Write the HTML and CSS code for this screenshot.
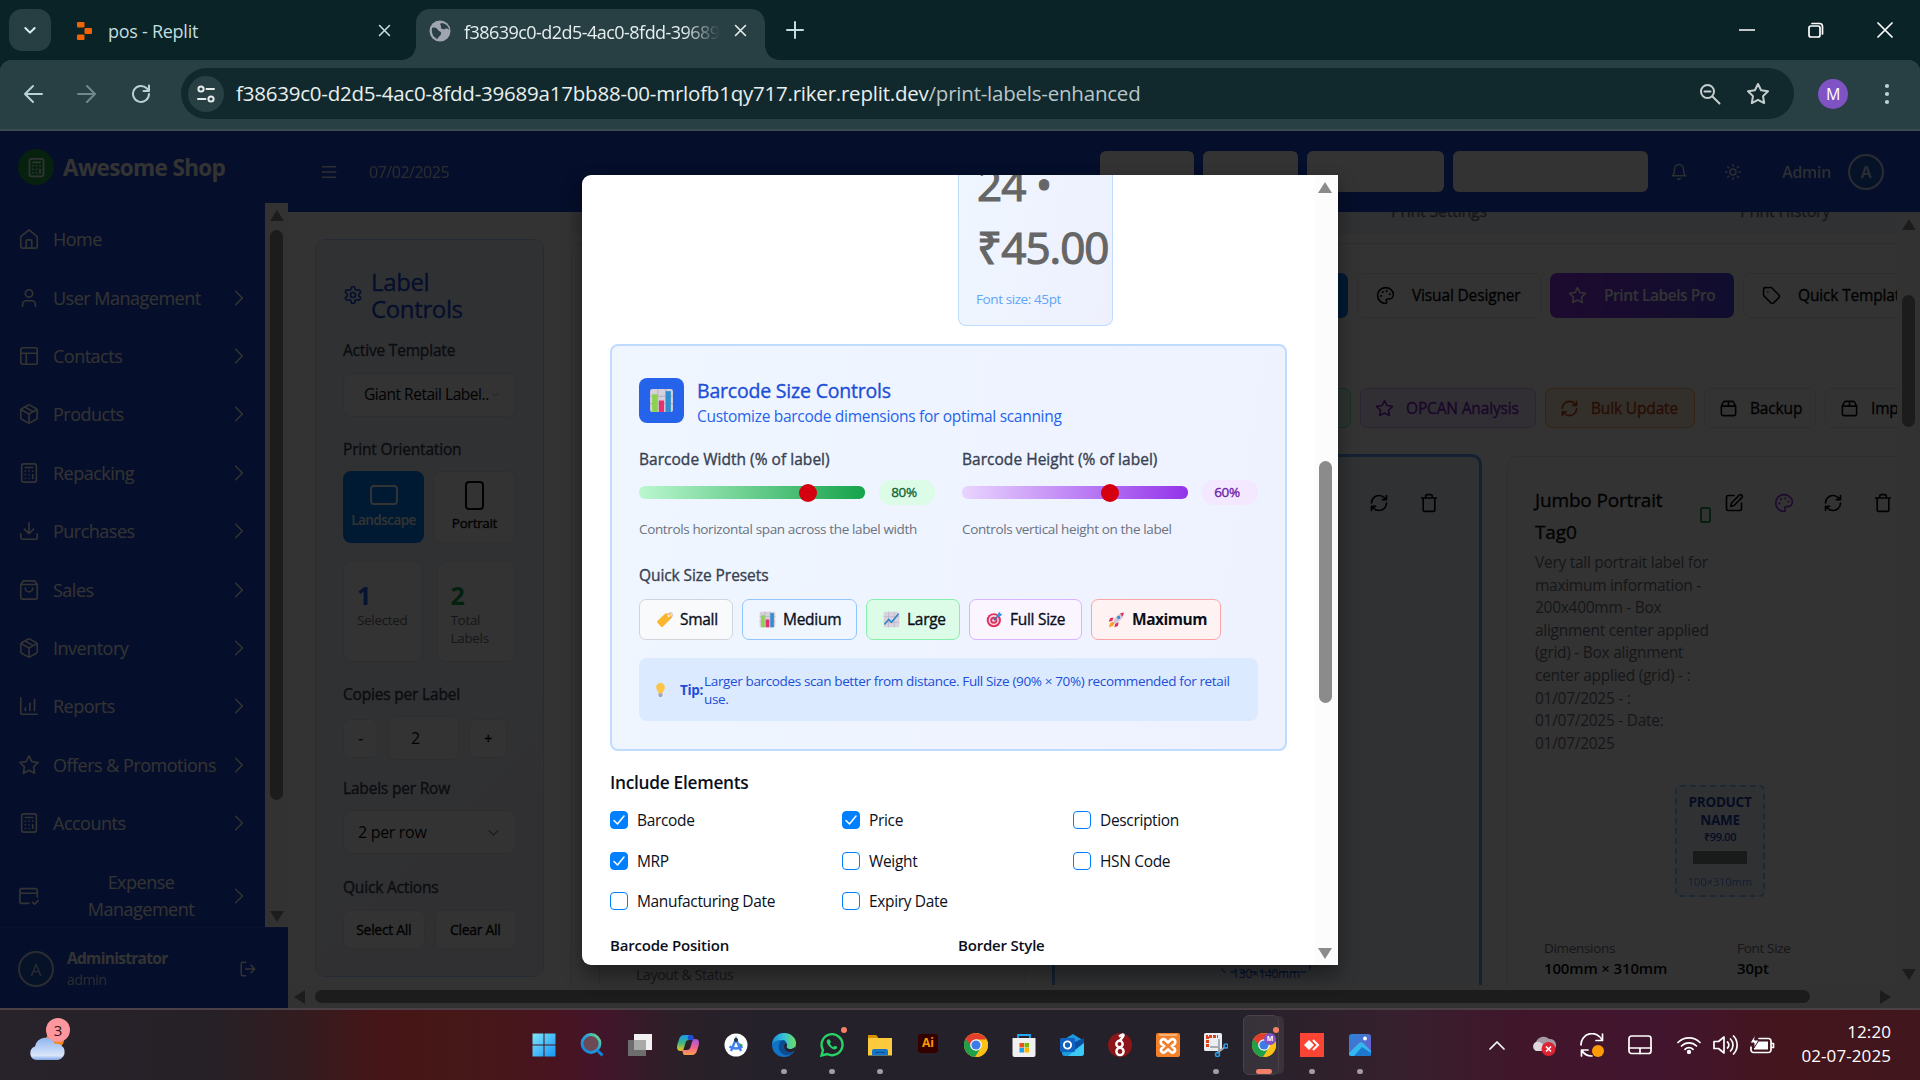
FILE: index.html
```html
<!DOCTYPE html>
<html lang="en">
<head>
<meta charset="utf-8">
<title>Print Labels Enhanced</title>
<link rel="stylesheet" href="styles.css">
</head>
<body>
<svg class="defs" aria-hidden="true">
  <defs>
    <linearGradient id="gWin" x1="0" y1="0" x2="1" y2="1"><stop offset="0" stop-color="#7fe6fb"/><stop offset="1" stop-color="#1595f5"/></linearGradient>
    <linearGradient id="gEdge" x1="0" y1="0" x2="1" y2="0"><stop offset="0" stop-color="#1b8fdc"/><stop offset=".5" stop-color="#35c1d8"/><stop offset="1" stop-color="#6fe05a"/></linearGradient>
    <linearGradient id="gCopA" x1="0" y1="0" x2="0" y2="1"><stop offset="0" stop-color="#1a9af0"/><stop offset=".5" stop-color="#3fb57f"/><stop offset="1" stop-color="#f3c51b"/></linearGradient>
    <linearGradient id="gCopB" x1="0" y1="0" x2="0" y2="1"><stop offset="0" stop-color="#a157e8"/><stop offset=".5" stop-color="#ee5f96"/><stop offset="1" stop-color="#ffa04a"/></linearGradient>
    <linearGradient id="gSearch" x1="0" y1="1" x2="1" y2="0"><stop offset="0" stop-color="#1182e0"/><stop offset=".6" stop-color="#2aa8d8"/><stop offset="1" stop-color="#7de07a"/></linearGradient>
    <linearGradient id="gPhoto" x1="0" y1="0" x2="1" y2="1"><stop offset="0" stop-color="#2486d8"/><stop offset="1" stop-color="#7a56c8"/></linearGradient>
    <linearGradient id="gCloud" x1="0" y1="0" x2="0" y2="1"><stop offset="0" stop-color="#8fb4f0"/><stop offset=".8" stop-color="#d9e6fa"/><stop offset="1" stop-color="#7ea6e6"/></linearGradient>
  </defs>
  <symbol id="i-home" viewBox="0 0 24 24"><path d="M3 9.5 12 2l9 7.500V20a2 2 0 0 1-2 2H5a2 2 0 0 1-2-2z"/><path d="M9 22v-8a1 1 0 0 1 1-1h4a1 1 0 0 1 1 1v8"/></symbol>
  <symbol id="i-user" viewBox="0 0 24 24"><path d="M19 21v-2a4 4 0 0 0-4-4H9a4 4 0 0 0-4 4v2"/><circle cx="12" cy="7" r="4"/></symbol>
  <symbol id="i-layout" viewBox="0 0 24 24"><rect x="3" y="3" width="18" height="18" rx="2"/><path d="M3 9h18M9 21V9"/></symbol>
  <symbol id="i-package" viewBox="0 0 24 24"><path d="M11 21.700a2 2 0 0 0 2 0l7-4a2 2 0 0 0 1-1.700V8a2 2 0 0 0-1-1.700l-7-4a2 2 0 0 0-2 0l-7 4A2 2 0 0 0 3 8v8a2 2 0 0 0 1 1.700zM12 22V12M3.300 7 12 12l8.700-5M7.500 4.300l9 5.100"/></symbol>
  <symbol id="i-calc" viewBox="0 0 24 24"><rect x="4" y="2" width="16" height="20" rx="2"/><path d="M8 6h8M16 14v4M16 10h.01M12 10h.01M8 10h.01M12 14h.01M8 14h.01M12 18h.01M8 18h.01"/></symbol>
  <symbol id="i-download" viewBox="0 0 24 24"><path d="M21 15v4a2 2 0 0 1-2 2H5a2 2 0 0 1-2-2v-4M7 10l5 5 5-5M12 15V3"/></symbol>
  <symbol id="i-bag" viewBox="0 0 24 24"><path d="M6 2 3 6v14a2 2 0 0 0 2 2h14a2 2 0 0 0 2-2V6l-3-4zM3 6h18M16 10a4 4 0 0 1-8 0"/></symbol>
  <symbol id="i-chart" viewBox="0 0 24 24"><path d="M3 3v16a2 2 0 0 0 2 2h16M18 17V5M13 17V9M8 17v-3"/></symbol>
  <symbol id="i-star" viewBox="0 0 24 24"><path d="m12 2 3.090 6.260L22 9.270l-5 4.870 1.180 6.880L12 17.770l-6.180 3.250L7 14.140 2 9.270l6.910-1.010z"/></symbol>
  <symbol id="i-cardcheck" viewBox="0 0 24 24"><path d="M21 13V6a2 2 0 0 0-2-2H4a2 2 0 0 0-2 2v12a2 2 0 0 0 2 2h8M2 9h19M16 19l2 2 4-4"/></symbol>
  <symbol id="i-right" viewBox="0 0 24 24"><path d="m8 4 8 8-8 8"/></symbol>
  <symbol id="i-down" viewBox="0 0 24 24"><path d="m5 9 7 7 7-7"/></symbol>
  <symbol id="i-logout" viewBox="0 0 24 24"><path d="M9 21H5a2 2 0 0 1-2-2V5a2 2 0 0 1 2-2h4M16 17l5-5-5-5M21 12H9"/></symbol>
  <symbol id="i-menu" viewBox="0 0 24 24"><path d="M3 5h18M3 12h18M3 19h18"/></symbol>
  <symbol id="i-bell" viewBox="0 0 24 24"><path d="M6 8a6 6 0 0 1 12 0c0 7 3 9 3 9H3s3-2 3-9M10.300 21a2 2 0 0 0 3.400 0"/></symbol>
  <symbol id="i-sun" viewBox="0 0 24 24"><circle cx="12" cy="12" r="4"/><path d="M12 2v2M12 20v2M4.900 4.900l1.400 1.400M17.700 17.700l1.400 1.400M2 12h2M20 12h2M6.300 17.700l-1.400 1.400M19.100 4.900l-1.400 1.400"/></symbol>
  <symbol id="i-gear" viewBox="0 0 24 24"><path d="M12.220 2h-.44a2 2 0 0 0-2 2v.18a2 2 0 0 1-1 1.730l-.43.25a2 2 0 0 1-2 0l-.15-.08a2 2 0 0 0-2.730.73l-.22.38a2 2 0 0 0 .73 2.730l.15.1a2 2 0 0 1 1 1.720v.51a2 2 0 0 1-1 1.740l-.15.09a2 2 0 0 0-.73 2.730l.22.38a2 2 0 0 0 2.730.73l.15-.08a2 2 0 0 1 2 0l.43.25a2 2 0 0 1 1 1.730V20a2 2 0 0 0 2 2h.44a2 2 0 0 0 2-2v-.18a2 2 0 0 1 1-1.730l.43-.25a2 2 0 0 1 2 0l.15.08a2 2 0 0 0 2.730-.73l.22-.39a2 2 0 0 0-.73-2.730l-.15-.08a2 2 0 0 1-1-1.740v-.5a2 2 0 0 1 1-1.740l.15-.09a2 2 0 0 0 .73-2.730l-.22-.38a2 2 0 0 0-2.730-.73l-.15.08a2 2 0 0 1-2 0l-.43-.25a2 2 0 0 1-1-1.730V4a2 2 0 0 0-2-2z"/><circle cx="12" cy="12" r="3"/></symbol>
  <symbol id="i-palette" viewBox="0 0 24 24"><path d="M12 2C6.500 2 2 6.500 2 12s4.500 10 10 10c.93 0 1.650-.75 1.650-1.690 0-.43-.18-.83-.44-1.120-.29-.29-.44-.65-.44-1.130a1.640 1.640 0 0 1 1.670-1.670h2c3.050 0 5.550-2.500 5.550-5.550C22 6 17.500 2 12 2z"/><path d="M13.500 6.500h.01M17.500 10.500h.01M8.500 7.500h.01M6.500 12.500h.01" stroke-width="2.600"/></symbol>
  <symbol id="i-tag" viewBox="0 0 24 24"><path d="M12.600 2.600A2 2 0 0 0 11.200 2H4a2 2 0 0 0-2 2v7.200a2 2 0 0 0 .6 1.400l8.700 8.700a2.400 2.400 0 0 0 3.400 0l6.600-6.600a2.400 2.400 0 0 0 0-3.400zM7.500 7.500h.01"/></symbol>
  <symbol id="i-refresh" viewBox="0 0 24 24"><path d="M3 12a9 9 0 0 1 9-9 9.750 9.750 0 0 1 6.740 2.740L21 8M21 3v5h-5M21 12a9 9 0 0 1-9 9 9.750 9.750 0 0 1-6.740-2.740L3 16M8 16H3v5"/></symbol>
  <symbol id="i-box" viewBox="0 0 24 24"><path d="M3 9h18v10a2 2 0 0 1-2 2H5a2 2 0 0 1-2-2zM3 9l2.450-4.900A2 2 0 0 1 7.240 3h9.520a2 2 0 0 1 1.800 1.100L21 9M12 3v6"/></symbol>
  <symbol id="i-edit" viewBox="0 0 24 24"><path d="M12 3H5a2 2 0 0 0-2 2v14a2 2 0 0 0 2 2h14a2 2 0 0 0 2-2v-7M18.400 2.600a2.100 2.100 0 0 1 3 3L12 15l-4 1 1-4z"/></symbol>
  <symbol id="i-trash" viewBox="0 0 24 24"><path d="M3 6h18M19 6v14a2 2 0 0 1-2 2H7a2 2 0 0 1-2-2V6M8 6V4a2 2 0 0 1 2-2h4a2 2 0 0 1 2 2v2"/></symbol>
  <symbol id="i-check" viewBox="0 0 18 18"><path d="m4 9.500 3.500 3.500 6.500-8"/></symbol>
  <symbol id="i-x" viewBox="0 0 24 24"><path d="m5 5 14 14M19 5 5 19"/></symbol>
  <symbol id="e-chart" viewBox="0 0 24 24"><rect x="1" y="1" width="22" height="22" rx="2" fill="#d6d0dd"/><path d="M8.500 1v22M16 1v22M1 8h22M1 15h22" stroke="#b5adc0" stroke-width="1"/><rect x="3" y="6" width="5" height="17" fill="#8bd34c"/><rect x="9.500" y="12" width="5" height="11" fill="#e5326f"/><rect x="16" y="3" width="5" height="20" fill="#2f8fd0"/></symbol>
  <symbol id="e-tag" viewBox="0 0 24 24"><path d="M13 3.500 20.500 3 22 10 10 22a2 2 0 0 1-3 0l-5-5.500a2 2 0 0 1 0-2.500z" fill="#fbb62d"/><circle cx="18" cy="6.500" r="1.800" fill="#fff"/><path d="M18 6c-1-4 5-5 5-1s-2 4-3 5" fill="none" stroke="#c99aa8" stroke-width="1.200"/></symbol>
  <symbol id="e-up" viewBox="0 0 24 24"><rect x="1" y="1" width="22" height="22" rx="2" fill="#d9d3e0"/><path d="M8 1v22M16 1v22M1 8h22M1 16h22" stroke="#b9b1c4" stroke-width="1"/><path d="m2 19 6-7 4 4L22 4" fill="none" stroke="#2b86c8" stroke-width="2.200"/></symbol>
  <symbol id="e-target" viewBox="0 0 24 24"><circle cx="11" cy="13" r="10" fill="#e0315f"/><circle cx="11" cy="13" r="7.200" fill="#f6dbe4"/><circle cx="11" cy="13" r="5" fill="#e0315f"/><circle cx="11" cy="13" r="2.200" fill="#f6dbe4"/><path d="m11 13 7-7" stroke="#2377b0" stroke-width="2"/><path d="m16 8 1-5 3-2v3h3l-2 3z" fill="#2f9ae0"/></symbol>
  <symbol id="e-rocket" viewBox="0 0 24 24"><path d="m8 9-5 1-2 5 5-1zM15 16l-1 5-5 2 1-5z" fill="#e0315f"/><path d="M7 16c3-7 6-12 15-14 0 8-6 13-13 16z" fill="#cfc8d8"/><path d="M17 3.500 22 2c0 2-.5 4-1.500 6z" fill="#e0315f"/><circle cx="15" cy="9" r="2.200" fill="#2f8fd0"/><path d="m7 15-4 2-2 6 6-2 2-4z" fill="#f9a12b"/></symbol>
  <symbol id="e-bulb" viewBox="0 0 24 24"><path d="M12 1a7.500 7.500 0 0 0-7 8c0 4 3.500 5 4 9h6c.5-4 4-5 4-9a7.500 7.500 0 0 0-7-8z" fill="#fbc54a"/><path d="M9 18h6v3a3 3 0 0 1-6 0z" fill="#a79fb3"/></symbol>
  <symbol id="t-chrome" viewBox="0 0 24 24"><circle cx="12" cy="12" r="12" fill="#fbc116"/><path d="M12 12 1.600 6A12 12 0 0 0 11 24l6-9z" fill="#1fa04b"/><path d="M12 12H6.500L1.600 6a12 12 0 0 1 20.800 0.500z" fill="#e43e2f"/><path d="M12 6.500h10.700A12 12 0 0 1 11.500 24L17 14z" fill="#fbc116"/><circle cx="12" cy="12" r="5.800" fill="#fff"/><circle cx="12" cy="12" r="4.600" fill="#3b7bea"/></symbol>
</svg>

<div class="screen">
  <div class="tabstrip">
    <div class="tab-search"><svg class="ico" width="16" height="16"><use href="#i-down"/></svg></div>
    <div class="tab">
      <svg width="17" height="20" viewBox="0 0 17 20"><g fill="#f26207"><rect x="1" y="1" width="7.500" height="5.500" rx="1"/><rect x="8.500" y="7" width="7.500" height="6" rx="1"/><rect x="1" y="13.500" width="7.500" height="5.500" rx="1"/></g></svg>
      <span class="tab-title">pos - Replit</span>
      <svg class="ico tab-x" width="17" height="17"><use href="#i-x"/></svg>
    </div>
    <div class="tab active">
      <svg width="22" height="22" viewBox="0 0 22 22"><circle cx="11" cy="11" r="10.500" fill="#9fa6b2"/><path d="M3 8c3-1 5 0 6 2s4 1 3 4-3 2-3 5c-4-1-7-5-6-11zM12 3c-2 2 1 3 0 4s2 3 4 2 3 0 4 1c0-4-4-7-8-7z" fill="#2b4046"/></svg>
      <span class="tab-title fade">f38639c0-d2d5-4ac0-8fdd-39689</span>
      <svg class="ico tab-x" width="17" height="17"><use href="#i-x"/></svg>
    </div>
    <svg class="ico new-tab" width="20" height="20" viewBox="0 0 20 20"><path d="M10 2v16M2 10h16"/></svg>
    <div class="win-ctl">
      <svg class="ico" width="16" height="16" viewBox="0 0 16 16"><path d="M0 8h16"/></svg>
      <svg class="ico" width="16" height="16" viewBox="0 0 16 16"><rect x="1" y="4" width="11" height="11" rx="2"/><path d="M4 1.500h7.500a3 3 0 0 1 3 3V12"/></svg>
      <svg class="ico" width="16" height="16" viewBox="0 0 16 16"><path d="m1 1 14 14M15 1 1 15"/></svg>
    </div>
  </div>

  <div class="toolbar">
    <svg class="ico" width="20" height="20" viewBox="0 0 20 20"><path d="M19 10H2M10 2l-8 8 8 8"/></svg>
    <svg class="ico dim" width="20" height="20" viewBox="0 0 20 20"><path d="M1 10h17M10 2l8 8-8 8"/></svg>
    <svg class="ico" width="20" height="20" viewBox="0 0 20 20"><path d="M18 10a8 8 0 1 1-2.300-5.700L18 6.500M18 1.500v5.500h-5.500"/></svg>
    <div class="omnibox">
      <div class="site-info"><svg class="ico" width="20" height="20" viewBox="0 0 20 20"><circle cx="5" cy="5" r="2.600"/><path d="M10.500 5H18M2 15h7.500"/><circle cx="15" cy="15" r="2.600"/></svg></div>
      <span class="url">f38639c0-d2d5-4ac0-8fdd-39689a17bb88-00-mrlofb1qy717.riker.replit.dev<em>/print-labels-enhanced</em></span>
      <svg class="ico zoom-out" width="22" height="22" viewBox="0 0 22 22"><circle cx="8.500" cy="8.500" r="6.500"/><path d="m13.500 13.500 7 7M5.500 8.500h6"/></svg>
      <svg class="ico" width="24" height="24"><use href="#i-star"/></svg>
    </div>
    <div class="profile">M</div>
    <svg class="dots" width="6" height="22" viewBox="0 0 6 22"><circle cx="3" cy="3" r="2.100"/><circle cx="3" cy="11" r="2.100"/><circle cx="3" cy="19" r="2.100"/></svg>
  </div>

  <div class="page">
    <aside class="sidebar">
      <div class="brand"><span class="brand-logo"><svg class="ico" width="21" height="21"><use href="#i-calc"/></svg></span><span class="brand-name">Awesome Shop</span></div>
      <div class="nav-wrap">
        <nav class="nav">
          <a class="nav-item"><svg class="ico"><use href="#i-home"/></svg><span>Home</span></a>
          <a class="nav-item"><svg class="ico"><use href="#i-user"/></svg><span>User Management</span><svg class="ico chev"><use href="#i-right"/></svg></a>
          <a class="nav-item"><svg class="ico"><use href="#i-layout"/></svg><span>Contacts</span><svg class="ico chev"><use href="#i-right"/></svg></a>
          <a class="nav-item"><svg class="ico"><use href="#i-package"/></svg><span>Products</span><svg class="ico chev"><use href="#i-right"/></svg></a>
          <a class="nav-item"><svg class="ico"><use href="#i-calc"/></svg><span>Repacking</span><svg class="ico chev"><use href="#i-right"/></svg></a>
          <a class="nav-item"><svg class="ico"><use href="#i-download"/></svg><span>Purchases</span><svg class="ico chev"><use href="#i-right"/></svg></a>
          <a class="nav-item"><svg class="ico"><use href="#i-bag"/></svg><span>Sales</span><svg class="ico chev"><use href="#i-right"/></svg></a>
          <a class="nav-item"><svg class="ico"><use href="#i-package"/></svg><span>Inventory</span><svg class="ico chev"><use href="#i-right"/></svg></a>
          <a class="nav-item"><svg class="ico"><use href="#i-chart"/></svg><span>Reports</span><svg class="ico chev"><use href="#i-right"/></svg></a>
          <a class="nav-item"><svg class="ico"><use href="#i-star"/></svg><span>Offers &amp; Promotions</span><svg class="ico chev"><use href="#i-right"/></svg></a>
          <a class="nav-item"><svg class="ico"><use href="#i-calc"/></svg><span>Accounts</span><svg class="ico chev"><use href="#i-right"/></svg></a>
          <a class="nav-item tall"><svg class="ico"><use href="#i-cardcheck"/></svg><span>Expense<br>Management</span><svg class="ico chev"><use href="#i-right"/></svg></a>
        </nav>
        <div class="vbar nav-bar"><i class="arr up"></i><i class="thumb"></i><i class="arr dn"></i></div>
      </div>
      <div class="account">
        <span class="avatar">A</span>
        <span class="who"><b>Administrator</b><small>admin</small></span>
        <svg class="ico" width="18" height="18"><use href="#i-logout"/></svg>
      </div>
    </aside>

    <div class="main">
      <header class="topbar">
        <svg class="ico" width="18" height="18"><use href="#i-menu"/></svg>
        <span class="date">07/02/2025</span>
        <div class="chips"><i class="chip w94"></i><i class="chip w95"></i><i class="chip w137"></i><i class="chip w195"></i></div>
        <svg class="ico bell" width="18" height="18"><use href="#i-bell"/></svg>
        <svg class="ico sun" width="18" height="18"><use href="#i-sun"/></svg>
        <span class="role">Admin</span><span class="avatar">A</span>
      </header>

      <div class="scroller">
        <div class="view">
          <section class="controls">
            <h2><svg class="ico" width="20" height="20"><use href="#i-gear"/></svg><span>Label Controls</span></h2>
            <h4>Active Template</h4>
            <div class="select tpl"><span>Giant Retail Label..</span><svg class="ico" width="9" height="9"><use href="#i-down"/></svg></div>
            <h4 class="orient">Print Orientation</h4>
            <div class="pair orient-btns">
              <div class="obtn on"><svg class="ico" width="28" height="20" viewBox="0 0 28 20"><rect x="1" y="1" width="26" height="18" rx="3"/></svg>Landscape</div>
              <div class="obtn"><svg class="ico" width="19" height="29" viewBox="0 0 19 29"><rect x="1" y="1" width="17" height="27" rx="3"/></svg>Portrait</div>
            </div>
            <div class="pair stats">
              <div class="stat blue"><b>1</b><span>Selected</span></div>
              <div class="stat green"><b>2</b><span>Total Labels</span></div>
            </div>
            <h4>Copies per Label</h4>
            <div class="copies"><span class="box sm">-</span><span class="box num">2</span><span class="box sm plus">+</span></div>
            <h4>Labels per Row</h4>
            <div class="select row"><span>2 per row</span><svg class="ico" width="15" height="15"><use href="#i-down"/></svg></div>
            <h4 class="quick">Quick Actions</h4>
            <div class="pair acts"><span class="box">Select All</span><span class="box">Clear All</span></div>
          </section>

          <section class="content">
            <div class="tabs"><span>Print Settings</span><span>Print History</span></div>
            <div class="panel">
              <div class="btn-row first">
                <span class="btn primary"></span>
                <span class="btn w184"><svg class="ico"><use href="#i-palette"/></svg>Visual Designer</span>
                <span class="btn pro w184"><svg class="ico"><use href="#i-star"/></svg>Print Labels Pro</span>
                <span class="btn"><svg class="ico"><use href="#i-tag"/></svg>Quick Templates</span>
              </div>
              <div class="btn-row second">
                <span class="btn greenb"></span>
                <span class="btn purple"><svg class="ico"><use href="#i-star"/></svg>OPCAN Analysis</span>
                <span class="btn orange"><svg class="ico"><use href="#i-refresh"/></svg>Bulk Update</span>
                <span class="btn backup"><svg class="ico"><use href="#i-box"/></svg>Backup</span>
                <span class="btn import"><svg class="ico"><use href="#i-box"/></svg>Import</span>
              </div>
              <div class="cards">
                <article class="card plain"><p class="layout-status">Layout &amp; Status</p></article>
                <article class="card selected">
                  <div class="tools"><svg class="ico"><use href="#i-refresh"/></svg><svg class="ico"><use href="#i-trash"/></svg></div>
                  <div class="mini"><span>130×140mm</span></div>
                </article>
                <article class="card jumbo">
                  <div class="card-head">
                    <div class="card-title">
                      <h3>Jumbo Portrait<br>Tag0</h3>
                      <p>Very tall portrait label for maximum information - 200x400mm - Box alignment center applied (grid) - Box alignment center applied (grid) - : 01/07/2025 - : 01/07/2025 - Date: 01/07/2025</p>
                    </div>
                    <svg class="ico phone" width="11" height="16" viewBox="0 0 11 16"><rect x="1" y="1" width="9" height="14" rx="1.500"/></svg>
                    <div class="tools"><svg class="ico"><use href="#i-edit"/></svg><svg class="ico violet"><use href="#i-palette"/></svg><svg class="ico"><use href="#i-refresh"/></svg><svg class="ico"><use href="#i-trash"/></svg></div>
                  </div>
                  <div class="label-prev"><b>PRODUCT NAME</b><strong>₹99.00</strong><i></i><small>100×310mm</small></div>
                  <div class="facts">
                    <div><span>Dimensions</span><b>100mm × 310mm</b></div>
                    <div><span>Font Size</span><b>30pt</b></div>
                  </div>
                </article>
              </div>
            </div>
          </section>
        </div>
        <div class="vbar main-bar"><i class="arr up"></i><i class="thumb"></i><i class="arr dn"></i></div>
      </div>
      <div class="hbar"><i class="arr lf"></i><i class="thumb"></i><i class="arr rt"></i></div>
    </div>

    <div class="overlay"></div>
    <div class="modal">
      <div class="modal-body">
        <div class="sample"><div class="sample-text">24 •<br>₹45.00</div><span>Font size: 45pt</span></div>
        <section class="size-box">
          <div class="size-head">
            <span class="badge-ico"><svg width="25" height="25"><use href="#e-chart"/></svg></span>
            <div><h3>Barcode Size Controls</h3><p>Customize barcode dimensions for optimal scanning</p></div>
          </div>
          <div class="sliders">
            <div class="slider-col">
              <label>Barcode Width (% of label)</label>
              <div class="slider"><span class="track green"><i class="knob k-w"></i></span><span class="pct green">80%</span></div>
              <small>Controls horizontal span across the label width</small>
            </div>
            <div class="slider-col">
              <label>Barcode Height (% of label)</label>
              <div class="slider"><span class="track violet"><i class="knob k-h"></i></span><span class="pct violet">60%</span></div>
              <small>Controls vertical height on the label</small>
            </div>
          </div>
          <h4>Quick Size Presets</h4>
          <div class="presets">
            <span class="preset small"><svg><use href="#e-tag"/></svg>Small</span>
            <span class="preset medium"><svg><use href="#e-chart"/></svg>Medium</span>
            <span class="preset large"><svg><use href="#e-up"/></svg>Large</span>
            <span class="preset full"><svg><use href="#e-target"/></svg>Full Size</span>
            <span class="preset max"><svg><use href="#e-rocket"/></svg>Maximum</span>
          </div>
          <div class="tip"><svg width="15" height="15"><use href="#e-bulb"/></svg><b>Tip:</b><span>Larger barcodes scan better from distance. Full Size (90% × 70%) recommended for retail use.</span></div>
        </section>
        <h4 class="inc">Include Elements</h4>
        <div class="checks">
          <label><i class="cb on"><svg class="ico" width="18" height="18"><use href="#i-check"/></svg></i>Barcode</label>
          <label><i class="cb on"><svg class="ico" width="18" height="18"><use href="#i-check"/></svg></i>Price</label>
          <label><i class="cb"></i>Description</label>
          <label><i class="cb on"><svg class="ico" width="18" height="18"><use href="#i-check"/></svg></i>MRP</label>
          <label><i class="cb"></i>Weight</label>
          <label><i class="cb"></i>HSN Code</label>
          <label><i class="cb"></i>Manufacturing Date</label>
          <label><i class="cb"></i>Expiry Date</label>
        </div>
        <div class="foot"><span>Barcode Position</span><span>Border Style</span></div>
      </div>
      <div class="vbar modal-bar"><i class="arr up"></i><i class="thumb"></i><i class="arr dn"></i></div>
    </div>
  </div>

  <footer class="taskbar">
    <div class="weather"><svg width="37" height="30" viewBox="0 0 37 30"><circle cx="26" cy="9" r="9" fill="#f5871f"/><path d="M7 29a7 7 0 0 1-1-13.500A10.500 10.500 0 0 1 26 13a8 8 0 1 1 3 16z" fill="url(#gCloud)"/></svg><span>3</span></div>
    <div class="apps">
      <span class="app"><svg viewBox="0 0 24 24"><path d="M.5.500h11v11H.500zM12.500.500h11v11h-11zM.500 12.500h11v11H.500zM12.500 12.500h11v11h-11z" fill="url(#gWin)"/></svg></span>
      <span class="app"><svg viewBox="0 0 24 24"><circle cx="11" cy="10.500" r="9" fill="#6b4a55" stroke="url(#gSearch)" stroke-width="2.800"/><path d="m17 17 5.500 5.500" stroke="#1182d8" stroke-width="3"/></svg></span>
      <span class="app"><svg viewBox="0 0 24 24"><rect x="6" y="1" width="18" height="16" fill="#f1f1f1"/><rect x="0" y="7" width="18" height="16" fill="#6d6d6d"/><path d="M6 7h12v10H6z" fill="#a9a9a9"/></svg></span>
      <span class="app"><svg viewBox="0 0 24 24"><path d="M8 2h7c2 0 2 2 3 5h-5c-2 0-3 1-3.500 3L8 15c-.5 2-1.500 3-3.500 3C1 18 .5 15 1.500 11L3.500 5C4.500 3 6 2 8 2z" fill="url(#gCopA)"/><path d="M13 2h2.500c1.500 0 2 2 2.500 5h-5c-1.500 0-2-3 0-5z" fill="#1d4fd0"/><path d="M16 22H9c-2 0-2-2-3-5h5c2 0 3-1 3.500-3L16 9c.5-2 1.500-3 3.500-3 3.500 0 4 3 3 7l-2 6c-1 2-2.500 3-4.500 3z" fill="url(#gCopB)"/></svg></span>
      <span class="app"><svg viewBox="0 0 24 24"><circle cx="12" cy="12" r="11.500" fill="#fff"/><path d="M15 10l4 2-3 3z" fill="#2c9b4b"/><path d="M7 18 12 6l5 12M5.500 13.500q6.500 4 13 0" fill="none" stroke="#3f7ff0" stroke-width="2.400"/><circle cx="12" cy="7" r="2" fill="#26323c"/></svg></span>
      <span class="app run"><svg viewBox="0 0 24 24"><circle cx="12" cy="12" r="12" fill="#1173c4"/><path d="M0 11C1 4 6 0 12 0c7 0 12 5 12 10 0 4-3 6-6 6-2 0-4-1-3-3 1-3-2-6-6-6-4 0-8 2-9 4z" fill="url(#gEdge)"/><path d="M9 8c-4 3-3 12 4 14 5 1 8-2 9-4-5 3-10 0-10-5 0-2 1-3 2-4-1-2-3-2-5-1z" fill="#0c4c93"/><path d="M14 10c2 1 0 3 1 5 1 1 5 2 8-1l1 3-2 1c-5 3-10 0-10-5 0-2 1-3 2-3z" fill="#28222a"/></svg></span>
      <span class="app run"><svg viewBox="0 0 24 24"><path d="M1.500 22.500 3 17A10.500 10.500 0 1 1 7.200 21z" fill="none" stroke="#27d366" stroke-width="2.400"/><path d="M8 6.500c-2 1-1.500 4 1.500 7s6 4 7.500 1.500c.5-1 0-1.300-2.200-2.200l-1.300 1.200c-1.500-.5-3-2-3.600-3.500l1-1.200C10.200 7 9.500 6 8 6.500z" fill="#27d366"/></svg><i class="note"></i></span>
      <span class="app run"><svg viewBox="0 0 24 24"><path d="M0 2h8l2 2v4H0z" fill="#d99100"/><path d="M0 5h24v17.500H0z" fill="#fdca3d"/><path d="M4 22.500V18a2 2 0 0 1 2-2h12a2 2 0 0 1 2 2v4.500z" fill="#1576c8"/><path d="M7 19.500h10" stroke="#0b4a8c"/></svg></span>
      <span class="app"><span class="ai">Ai</span></span>
      <span class="app"><svg><use href="#t-chrome"/></svg></span>
      <span class="app"><svg viewBox="0 0 24 24"><path d="M6 6V2h12v4" fill="none" stroke="#25a6f0" stroke-width="1.800"/><path d="M.5 5h23v17a2 2 0 0 1-2 2h-19a2 2 0 0 1-2-2z" fill="#f0f0f0"/><path d="M7.500 10H12v4.500H7.500z" fill="#ee4d1d"/><path d="M12.500 10H17v4.500h-4.500z" fill="#7eb900"/><path d="M7.500 15H12v4.500H7.500z" fill="#1aa0ec"/><path d="M12.500 15H17v4.500h-4.500z" fill="#fbb800"/></svg></span>
      <span class="app"><svg viewBox="0 0 24 24"><path d="m3 7 10-6 11 7v12a3 3 0 0 1-3 3H5a3 3 0 0 1-3-3z" fill="#1d9ae0"/><path d="M8 12 24 5v5L12 19z" fill="#0c4ea2"/><path d="m8 23 16-13v10a3 3 0 0 1-3 3z" fill="#3cc9f5"/><rect x="0" y="5" width="15" height="14" rx="1.500" fill="#0f62c0"/><circle cx="7.500" cy="12" r="3.600" fill="none" stroke="#fff" stroke-width="1.900"/></svg></span>
      <span class="app"><svg viewBox="0 0 24 24"><circle cx="12" cy="12" r="12" fill="#8c1519"/><path d="M11 3.500q6-4 4 0l-3 4" fill="none" stroke="#fff" stroke-width="2.500"/><circle cx="11.500" cy="11" r="3.200" fill="none" stroke="#fff" stroke-width="2.400"/><circle cx="12" cy="18.500" r="3.600" fill="none" stroke="#fff" stroke-width="2.400"/></svg></span>
      <span class="app"><svg viewBox="0 0 24 24"><rect width="24" height="24" rx="2" fill="#f3812b"/><path d="M3 2h18" stroke="#fbc08c" stroke-width="1.500"/><path d="M12 9.500 9.500 7a2.800 2.800 0 0 0-4 4L8 13l-2.500 2.500a2.500 2.500 0 0 0 3.500 3.500l3-2.500 3 2.500a2.500 2.500 0 0 0 3.500-3.500L16 13l2.500-2a2.800 2.800 0 0 0-4-4z" fill="none" stroke="#fff" stroke-width="2.600"/></svg></span>
      <span class="app run"><svg viewBox="0 0 24 24"><rect width="18" height="18" rx="1.500" fill="#e9ecf0"/><path d="M3.500 14V3.500H14" fill="none" stroke="#d8431c" stroke-width="3" stroke-dasharray="3 1"/><path d="M6 14h9V6" fill="none" stroke="#a7adb5" stroke-width="2"/><path d="m13 20 8-6M15 14l0 6" stroke="#9aa1ab" stroke-width="2"/><circle cx="22" cy="13" r="2" fill="none" stroke="#2b9fe6" stroke-width="1.600"/><circle cx="13.500" cy="21.500" r="2" fill="none" stroke="#2b9fe6" stroke-width="1.600"/></svg></span>
      <span class="app current"><svg><use href="#t-chrome"/></svg><i class="prof">M</i><i class="note"></i></span>
      <span class="app run"><svg viewBox="0 0 24 24"><rect width="24" height="24" fill="#fb4434"/><path d="m9 7 5 5-5 5-5-5z" fill="#fff"/><path d="m13 7 5 5-5 5" fill="none" stroke="#fff" stroke-width="2"/></svg></span>
      <span class="app run"><svg viewBox="0 0 24 24"><rect x="1" y="1" width="22" height="22" rx="3" fill="url(#gPhoto)"/><path d="M1 20 11 10q2-1.500 4 0l8 8v3a2 2 0 0 1-2 2H3a2 2 0 0 1-2-2z" fill="#33b8ee"/><path d="m6 23 8-9 9 6v1a2 2 0 0 1-2 2z" fill="#1d79cf"/><circle cx="17" cy="5.500" r="1.900" fill="#fff"/></svg></span>
    </div>
    <div class="tray">
      <svg class="ico t-up" width="18" height="12" viewBox="0 0 18 12"><path d="m2 10 7-7 7 7"/></svg>
      <svg class="t-cloud" width="25" height="21" viewBox="0 0 25 21"><path d="M5 16a5 5 0 0 1 0-9 8 8 0 0 1 13-3 6 6 0 0 1 2 12z" fill="#a59aa3"/><path d="M5 16a5 5 0 0 1 0-9q5-1 8 4v5z" fill="#dcd8db"/><circle cx="17.500" cy="14" r="7" fill="#dc2433"/><path d="m15 11.500 5 5M20 11.500l-5 5" stroke="#fff" stroke-width="1.700"/></svg>
      <svg class="ico t-sync" width="24" height="24" viewBox="0 0 24 24"><path d="M1 12A11 11 0 0 1 22 7M22.500 1v6.500H16M12 23A11 11 0 0 1 2 17.500M1.500 23v-6H8"/><circle cx="18" cy="18" r="6" fill="#fd9a06" stroke="none"/></svg>
      <svg class="ico t-pad" width="24" height="20" viewBox="0 0 24 20"><rect x="1" y="1" width="22" height="17.500" rx="2.500"/><path d="M1 13h22M12 13v5.500"/></svg>
      <svg class="ico t-wifi" width="24" height="18" viewBox="0 0 24 18"><path d="M1 6.500a15.500 15.500 0 0 1 22 0M4.500 10a10.600 10.600 0 0 1 15 0M8 13.300a5.600 5.600 0 0 1 8 0"/><circle cx="12" cy="16" r="1.300" fill="#fff"/></svg>
      <svg class="ico t-vol" width="25" height="20" viewBox="0 0 25 20"><path d="M1 6.500h4.500L11 2v16l-5.500-4.500H1zM14.500 7a4 4 0 0 1 0 6M17.500 4a8.500 8.500 0 0 1 0 12M20.500 1a13 13 0 0 1 0 18"/></svg>
      <svg class="ico t-bat" width="25" height="20" viewBox="0 0 25 20"><path d="M9 3.500h9.500a2.500 2.500 0 0 1 2.500 2.500v9a2.500 2.500 0 0 1-2.500 2.500h-15A2.500 2.500 0 0 1 1 15v-3M22 8.500h1.500v4H22"/><rect x="4" y="6.500" width="14" height="8" fill="#fff" stroke="none"/><path d="M5 0 0 8h4v5l5-8H5z" fill="#fff" stroke="#42152c" stroke-width="1"/></svg>
      <div class="clock"><span>12:20</span><span>02-07-2025</span></div>
    </div>
  </footer>
</div>
</body>
</html>
```
FILE: styles.css
```css
* { box-sizing: border-box; }
body { margin: 0; font-family: "Open Sans", "Noto Sans", sans-serif; font-size: 16px; letter-spacing: -0.02em; color: #09090b; }
h2, h3, h4, p { margin: 0; font-weight: 500; }
i, em { font-style: normal; }
.defs { position: absolute; width: 0; height: 0; }
.ico { fill: none; stroke: currentColor; stroke-width: 2; stroke-linecap: round; stroke-linejoin: round; flex: none; }
svg { display: block; flex: none; }
.screen { width: 1920px; height: 1080px; overflow: hidden; display: flex; flex-direction: column; }

/* Medium weight, between the regular and semibold faces */
.controls h2, .controls h4, .obtn, .box, .tabs, .btn, .card h3, .sample-text, .size-head h3, .slider-col label, .size-box h4, .pct, .preset { -webkit-text-stroke: .35px currentColor; }
.btn.pro, .obtn.on, .preset.max, .box.num { -webkit-text-stroke: 0; }

/* Browser window */
.tabstrip { height: 60px; background: #0a2327; display: flex; align-items: center; color: #c4dcde; flex: none; }
.tab-search { width: 42px; height: 42px; border-radius: 13px; margin-left: 9px; background: #273e42; display: flex; align-items: center; justify-content: center; color: #dfeff0; }
.tab-search .ico { stroke-width: 3; }
.tab { display: flex; align-items: center; margin-left: 25px; width: 317px; height: 60px; padding-top: 1px; }
.tab-title { margin-left: 15px; font-size: 18px; line-height: 24px; flex: 1; white-space: nowrap; overflow: hidden; letter-spacing: -0.015em; }
.tab-x { margin-right: 0; stroke-width: 2.300; }
.tab .tab-x { margin-top: -1px; }
.tab.active { position: relative; background: #283f43; width: 349px; height: 51px; margin: 9px 0 0 23px; border-radius: 14px 14px 0 0; padding: 0 16px 8px 13px; color: #e6eeee; }
.tab.active::before, .tab.active::after { content: ""; position: absolute; bottom: 0; width: 14px; height: 14px; }
.tab.active::before { left: -14px; background: radial-gradient(circle at 0 0, transparent 13.500px, #283f43 14px); }
.tab.active::after { right: -14px; background: radial-gradient(circle at 100% 0, transparent 13.500px, #283f43 14px); }
.tab.active .tab-title { margin: 2px 12px 0 13px; letter-spacing: -0.03em; }
.tab.active .tab-x { margin-top: 0; }
.fade { -webkit-mask-image: linear-gradient(90deg, #000 86%, transparent); mask-image: linear-gradient(90deg, #000 86%, transparent); }
.new-tab { margin-left: 20px; }
.win-ctl { margin-left: auto; display: flex; gap: 53px; padding-right: 27px; color: #fff; }
.win-ctl .ico { stroke-width: 1.700; }
.toolbar { height: 71px; display: flex; align-items: center; color: #b7d3d4; flex: none; padding: 0 30px 2px 23px; gap: 34px; background: radial-gradient(circle at 12px 12px, #283f43 12px, #0a2327 12.500px) 0 0 / 12px 12px no-repeat, radial-gradient(circle at 0 12px, #283f43 12px, #0a2327 12.500px) 100% 0 / 12px 12px no-repeat, #283f43; border-bottom: 2px solid #3b4b4e; }
.dim { opacity: .5; }
.omnibox { flex: 1; height: 51px; border-radius: 26px; background: #11292d; display: flex; align-items: center; padding: 0 24px 0 7px; margin: 0 -10px 0 -4px; color: #c5cfd0; }
.site-info { width: 36px; height: 36px; border-radius: 50%; background: #283f43; display: flex; align-items: center; justify-content: center; color: #e4ecec; }
.url { margin: -2px 0 0 12px; font-size: 20.500px; color: #e9efef; flex: 1; letter-spacing: -0.0107em; }
.url em { color: #b9c6c7; }
.zoom-out { margin-right: 25px; }
.profile { width: 30px; height: 30px; border-radius: 50%; background: #8053c4; color: #fff; display: flex; align-items: center; justify-content: center; font-size: 16px; }
.dots { fill: #b7d3d4; margin-left: 2px; }

/* Application shell */
.page { height: 877px; position: relative; display: flex; flex: none; overflow: hidden; background: #fff; }
.overlay { position: absolute; inset: 0; background: rgba(0, 0, 0, .8); }
.sidebar { width: 288px; background: #1b48d0; color: #fff; display: flex; flex-direction: column; flex: none; }
.brand { height: 72px; display: flex; align-items: center; padding-left: 18px; gap: 9px; }
.brand-logo { width: 36px; height: 36px; border-radius: 50%; background: #22a447; display: flex; align-items: center; justify-content: center; }
.brand-name { font-size: 22.500px; font-weight: 700; letter-spacing: -0.028em; }
.nav-wrap { height: 724px; display: flex; }
.nav { width: 265px; padding-top: 7px; overflow: hidden; flex: none; }
.nav-item { display: flex; align-items: center; height: 58.400px; padding: 0 19px 0 18px; font-size: 18px; }
.nav-item .ico { width: 22px; height: 22px; stroke-width: 1.800; }
.nav-item span { margin: 0 auto 0 13px; letter-spacing: -0.028em; white-space: nowrap; }
.nav-item .ico.chev { width: 20px; height: 22px; margin-right: -3px; }
.nav-item.tall { height: 87px; line-height: 27px; text-align: center; }
.nav-item.tall span { margin: 0 auto; padding-left: 13px; }
.vbar { width: 23px; display: flex; flex-direction: column; align-items: center; background: #fafafa; color: #8b8b8b; flex: none; }
.arr { width: 0; height: 0; border: 7px solid transparent; flex: none; }
.arr.up { border-top: 0; border-bottom: 11px solid currentColor; }
.arr.dn { border-bottom: 0; border-top: 11px solid currentColor; margin-top: auto; }
.arr.lf { border-left: 0; border-right: 11px solid currentColor; }
.arr.rt { border-right: 0; border-left: 11px solid currentColor; margin-left: auto; }
.thumb { background: #8b8b8b; border-radius: 7px; flex: none; }
.nav-bar { padding: 7px 0 5px; }
.nav-bar .thumb { width: 13px; height: 570px; margin-top: 9px; }
.account { height: 81px; border-top: 1px solid #2f5ddb; display: flex; align-items: center; padding: 2px 31px 0 18px; }
.avatar { width: 36px; height: 36px; border-radius: 50%; border: 2px solid #fff; background: #1f63c4; display: flex; align-items: center; justify-content: center; font-size: 17px; opacity: .8; }
.who { display: flex; flex-direction: column; margin: 0 auto 0 13px; line-height: 21px; }
.who b { font-size: 15.500px; letter-spacing: -0.045em; }
.who small { font-size: 14px; opacity: .8; }
.main { flex: 1; min-width: 0; display: flex; flex-direction: column; }
.topbar { height: 81px; background: #1b48d0; color: #fff; display: flex; align-items: center; padding: 0 36px 0 32px; flex: none; }
.date { margin-left: 31px; font-size: 16px; opacity: .8; letter-spacing: -0.03em; }
.chips { display: flex; gap: 9px; margin-left: auto; }
.chip { height: 41px; border-radius: 6px; background: #fff; }
.w94 { width: 94px; } .w95 { width: 95px; } .w137 { width: 137px; } .w195 { width: 195px; }
.bell { margin-left: 22px; } .sun { margin-left: 36px; }
.role { margin: 0 17px 0 40px; font-weight: 600; }
.topbar .avatar { font-weight: 700; font-size: 16px; }
.topbar .role, .topbar .ico { opacity: .85; }
.scroller { height: 773px; display: flex; }
.view { width: 1609px; overflow: hidden; display: flex; align-items: flex-start; padding-left: 27px; gap: 27px; }
.main-bar { padding: 7px 0 5px; }
.main-bar .thumb { width: 13px; height: 132px; margin-top: 65px; }
.hbar { height: 23px; background: #fafafa; color: #8b8b8b; display: flex; align-items: center; padding: 0 29px 0 6px; }
.hbar .thumb { height: 13px; width: 1495px; margin-left: 10px; }

/* Label controls */
.controls { width: 229px; height: 738px; margin-top: 27px; border: 1px solid #bfdbfe; border-radius: 10px; background: linear-gradient(135deg, #eff6ff, #eef0fb); padding: 28px 27px 0; flex: none; }
.controls h2 { display: flex; align-items: center; gap: 8px; font-size: 24px; line-height: 27px; color: #1d4ed8; letter-spacing: -0.015em; margin-bottom: 16px; }
.controls h4 { font-size: 15.500px; line-height: 22px; color: #374151; margin-top: 17px; letter-spacing: -0.012em; }
.select { display: flex; align-items: center; justify-content: space-between; height: 44px; border: 1px solid #e4e4e7; border-radius: 8px; background: #fff; padding: 0 14px 2px; margin-top: 12px; white-space: nowrap; }
.select .ico { opacity: .5; }
.select.tpl { padding: 0 15px 2px 20px; font-size: 15.500px; letter-spacing: -0.03em; }
.controls h4.orient { margin-top: 21px; }
.pair { display: flex; gap: 9px; }
.pair > * { flex: 1; }
.orient-btns { margin-top: 11px; height: 72px; }
.obtn { display: flex; flex-direction: column; align-items: center; justify-content: center; gap: 3px; border: 1px solid #e4e4e7; border-radius: 8px; background: #fff; font-size: 13.500px; line-height: 20px; }
.obtn.on { background: #0080ff; color: #fff; border: 0; font-weight: 600; gap: 5px; letter-spacing: -0.04em; }
.stats { margin-top: 18px; height: 101px; gap: 14px; }
.stat { border: 1px solid #e4e4e7; border-radius: 9px; background: #fff; padding: 18px 13px 0; display: flex; flex-direction: column; font-size: 13.500px; line-height: 18px; color: #71717a; }
.stat b { font-size: 25px; line-height: 31px; }
.stat.blue b { color: #2563eb; } .stat.green b { color: #16a34a; }
.controls .stats + h4 { margin-top: 21px; }
.copies { display: flex; align-items: center; gap: 10px; margin-top: 11px; }
.box { display: flex; align-items: center; justify-content: center; height: 39px; border: 1px solid #e4e4e7; border-radius: 7px; background: #fff; font-size: 14px; }
.box.sm { width: 35px; } .box.plus { width: 38px; }
.box.num { width: 71px; height: 44px; font-size: 16px; padding-right: 16px; }
.controls .copies + h4 { margin-top: 17px; }
.select.row { margin-top: 11px; padding-bottom: 0; }
.controls h4.quick { margin-top: 22px; }
.acts { margin-top: 12px; gap: 10px; }

/* Template list */
.content { width: 1500px; flex: none; }
.tabs { height: 22px; background: #f1f5f9; display: flex; color: #71717a; font-size: 16px; line-height: 22px; overflow: hidden; padding-left: 820px; letter-spacing: -0.015em; }
.tabs span { margin-top: -12px; width: 349px; flex: none; }
.panel { margin-top: 9px; border: 1px solid #e4e4e7; border-radius: 10px; height: 900px; padding: 29px 0 0 27px; }
.btn-row { display: flex; gap: 9px; }
.btn { display: flex; align-items: center; height: 45px; border: 1px solid #e4e4e7; border-radius: 7px; background: #fff; padding: 0 18px 1px; font-size: 15.500px; gap: 17px; white-space: nowrap; flex: none; letter-spacing: -0.01em; }
.btn .ico { width: 19px; height: 19px; }
.btn.primary { width: 150px; margin-left: 599px; background: #0080ff; border: 0; }
.w184 { width: 184px; }
.btn.pro { background: linear-gradient(90deg, #9333ea, #4f46e5); color: #fff; border: 0; font-weight: 600; letter-spacing: -0.028em; }
.second { margin-top: 70px; }
.second .btn { height: 40px; padding: 0 14px; gap: 12px; }
.btn.greenb { width: 150px; margin-left: 602px; background: #dcfce7; border-color: #86efac; }
.btn.purple { width: 176px; background: #f3e8ff; border-color: #d8b4fe; color: #7e22ce; }
.btn.orange { width: 150px; background: #ffedd5; border-color: #fdba74; color: #c2410c; }
.btn.backup { width: 112px; }
.btn.import { width: 112px; }
.cards { display: flex; align-items: flex-start; margin-top: 28px; height: 540px; }
.card { border: 1px solid #e4e4e7; border-radius: 10px; flex: none; height: 700px; background: #fff; }
.card.plain { width: 427px; }
.layout-status { padding: 508px 0 0 36px; font-size: 14px; color: #71717a; }
.card.selected { width: 430px; border: 3px solid #60a5fa; margin: -2px 0 0 26px; background: #eff6ff; }
.tools { display: flex; gap: 29.500px; }
.tools .ico { width: 20px; height: 20px; }
.selected .tools { padding: 36px 0 0 314px; }
.mini { width: 90px; height: 450px; margin: 10px 0 0 166px; border: 2px dashed #60a5fa; border-radius: 5px; display: flex; align-items: flex-end; justify-content: center; font-size: 12px; line-height: 16px; color: #1d4ed8; }
.mini span { margin-bottom: -11px; }
.card.jumbo { width: 431px; margin-left: 25px; padding: 27px 0 0 27px; }
.card-head { display: flex; align-items: flex-start; }
.card-title { width: 178px; }
.card h3 { font-size: 19px; line-height: 32px; letter-spacing: -0.008em; white-space: nowrap; }
.card-title p { font-size: 15.500px; line-height: 22.600px; color: #71717a; letter-spacing: -0.018em; margin-top: 3px; font-weight: 400; }
.phone { color: #16a34a; margin: 23px 11px 0 -13px; }
.jumbo .tools { margin-top: 9px; padding-left: 2px; }
.violet { color: #9333ea; }
.label-prev { width: 90px; height: 112px; margin: 31px 0 0 140px; border: 2px dashed #93c5fd; border-radius: 5px; background: #eff6ff; display: flex; flex-direction: column; align-items: center; text-align: center; color: #1e40af; padding-top: 6px; }
.label-prev b { font-size: 13.500px; line-height: 18px; letter-spacing: -0.02em; }
.label-prev strong { font-size: 11px; line-height: 16px; font-weight: 600; }
.label-prev i { width: 54px; height: 13px; background: #7d8580; margin-top: 6px; flex: none; }
.label-prev small { font-size: 11px; line-height: 16px; margin-top: 10px; color: #2563eb; opacity: .7; letter-spacing: 0; }
.facts { display: flex; gap: 15px; margin-top: 32px; }
.facts div { width: 178px; background: #fcfcfd; border-radius: 7px; padding: 9px; display: flex; flex-direction: column; font-size: 13.500px; line-height: 20px; height: 70px; color: #71717a; flex: none; }
.facts b { font-size: 15px; font-weight: 600; color: #09090b; letter-spacing: -0.01em; }

/* Edit dialog */
.modal { position: absolute; left: 582px; top: 44px; width: 756px; height: 790px; border-radius: 9px 0 0 9px; background: #fff; display: flex; overflow: hidden; box-shadow: 0 10px 20px rgba(0, 0, 0, .4); color: #0a0f1c; }
.modal-body { width: 732px; padding: 0 27px 0 28px; }
.modal-bar { width: 24px; padding: 7px 2px 6px 0; background: #fcfcfc; }
.modal-bar .thumb { width: 13px; height: 242px; margin-top: 268px; }
.sample { width: 155px; height: 151px; margin-left: 348px; border: 1px solid #bfdbfe; border-top: 0; border-radius: 0 0 8px 8px; background: linear-gradient(100deg, #eff6ff, #eef0fe); padding-left: 18px; color: #60a5fa; font-size: 13.500px; overflow: hidden; }
.sample-text { font-size: 44px; line-height: 63px; color: #666; margin-top: -22px; letter-spacing: -0.022em; white-space: nowrap; -webkit-text-stroke-width: 1.200px; }
.sample span { display: block; margin: 11px 0 0 -1px; letter-spacing: -0.03em; }
.size-box { margin-top: 18px; height: 407px; border: 2px solid #bfdbfe; border-radius: 8px; background: linear-gradient(100deg, #eff6ff, #eef2ff); padding: 31px 27px 0; }
.size-head { display: flex; gap: 13px; align-items: center; height: 46px; }
.badge-ico { width: 45px; height: 45px; border-radius: 8px; background: #2563eb; display: flex; align-items: center; justify-content: center; }
.size-head h3 { font-size: 19.500px; line-height: 27px; color: #1d4ed8; letter-spacing: -0.01em; }
.size-head p { font-size: 15.500px; line-height: 25px; font-weight: 400; color: #2563eb; letter-spacing: -0.019em; }
.size-head div { margin-top: 6px; white-space: nowrap; }
.sliders { display: flex; gap: 27px; margin-top: 25px; }
.slider-col { width: 296px; display: flex; flex-direction: column; white-space: nowrap; }
.slider-col label { font-size: 15.500px; line-height: 22px; color: #374151; letter-spacing: 0.002em; }
.slider { display: flex; align-items: center; gap: 14px; margin-top: 10px; height: 25px; }
.track { width: 226px; height: 13px; border-radius: 6px; display: flex; align-items: center; }
.track.green { background: linear-gradient(90deg, #bbf7d0, #16a34a); }
.track.violet { background: linear-gradient(90deg, #e9d5ff, #9333ea); }
.knob { width: 18px; height: 18px; border-radius: 50%; background: #d5000f; flex: none; }
.k-w { margin-left: 160px; } .k-h { margin-left: 139px; }
.pct { width: 56px; height: 25px; border-radius: 12px; font-size: 13.500px; display: flex; align-items: center; justify-content: center; padding: 0 6px 1px 0; }
.pct.green { background: #dcfce7; color: #166534; }
.pct.violet { background: #f3e8ff; color: #6b21a8; }
.slider-col small { font-size: 13.500px; line-height: 20px; margin-top: 14px; color: #6b7280; letter-spacing: -0.027em; }
.size-box h4 { font-size: 15.500px; line-height: 22px; margin-top: 25px; color: #374151; letter-spacing: -0.005em; }
.presets { display: flex; gap: 9px; margin-top: 13px; }
.preset { height: 41px; border: 1px solid; border-radius: 7px; display: flex; align-items: center; gap: 7px; padding: 0 0 1px 16px; font-size: 15.500px; white-space: nowrap; letter-spacing: -0.018em; }
.preset svg { width: 17px; height: 17px; }
.preset.small { width: 94px; background: #f9fafb; border-color: #d1d5db; }
.preset.medium { width: 115px; background: #eff6ff; border-color: #93c5fd; }
.preset.large { width: 94px; background: #dcfce7; border-color: #86efac; }
.preset.full { width: 113px; background: #faf5ff; border-color: #d8b4fe; }
.preset.max { width: 130px; background: #fef2f2; border-color: #fca5a5; font-weight: 700; letter-spacing: -0.03em; }
.preset, .preset.small, .preset.max { color: #0a0f1c; }
.tip { margin-top: 18px; height: 63px; border-radius: 8px; background: #dbeafe; display: flex; align-items: center; padding: 0 14px; color: #1d4ed8; font-size: 13.500px; line-height: 18px; }
.tip b { margin-left: 12px; }
.tip span { letter-spacing: -0.027em; margin-left: 1px; }
.inc { font-size: 17.300px; font-weight: 600; line-height: 24px; margin-top: 20px; letter-spacing: -0.016em; }
.checks { display: grid; grid-template-columns: 232px 231px 200px; grid-auto-rows: 40.600px; margin-top: 5px; font-size: 15.500px; letter-spacing: -0.022em; }
.checks label { display: flex; align-items: center; gap: 9px; }
.cb { width: 18px; height: 18px; border: 1px solid #0080ff; border-radius: 4px; background: #fff; display: flex; align-items: center; justify-content: center; color: #fff; }
.cb.on { background: #0080ff; }
.cb .ico { stroke-width: 1.500; }
.foot { display: flex; font-size: 15px; font-weight: 600; margin-top: 12px; line-height: 22px; letter-spacing: -0.013em; }
.foot span { width: 348px; flex: none; white-space: nowrap; }

/* Taskbar */
.taskbar { height: 72px; flex: none; border-top: 2px solid #4c4047; display: flex; align-items: center; background: linear-gradient(90deg, #28222a 0, #262127 210px, #331c20 300px, #461517 380px, #461817 460px, #481420 550px, #43152a 600px, #2a2028 680px, #25212a 760px, #25212a 1240px, #37202e 1400px, #41152a 1530px, #42152f 1660px, #44151c 1790px, #41161d 1920px); color: #fff; }
.weather { position: relative; width: 505px; padding: 1px 0 0 29px; }
.weather span { position: absolute; left: 46px; top: -12px; width: 24px; height: 24px; border-radius: 50%; background: #fd979d; color: #2a1518; font-size: 15px; display: flex; align-items: center; justify-content: center; }
.apps { display: flex; margin-left: 15px; }
.app { position: relative; width: 48px; height: 60px; display: flex; align-items: center; justify-content: center; }
.app > svg { width: 24px; height: 24px; }
.app.run::after { content: ""; position: absolute; bottom: 1px; left: 21px; width: 6px; height: 5px; border-radius: 3px; background: #a39da3; }
.app.current::before { content: ""; position: absolute; inset: 0 9px 0 3px; border: 1px solid #4a4248; background: rgba(255, 255, 255, .08); border-radius: 6px; box-shadow: 6px 0 0 -1px #39323a; z-index: -1; }
.app.current { z-index: 0; }
.app.current::after { content: ""; position: absolute; bottom: 1px; left: 16px; width: 16px; height: 5px; border-radius: 3px; background: #f4806a; }
.note { position: absolute; right: 9px; top: 12px; width: 6px; height: 6px; border-radius: 50%; background: #f4806a; }
.prof { position: absolute; left: 24px; top: 18px; width: 12px; height: 12px; border-radius: 50%; background: #8053c4; font-size: 7px; line-height: 12px; text-align: center; font-weight: 700; }
.ai { width: 20px; height: 19px; margin-top: -3px; border-radius: 3px; background: #330000; color: #ff9a00; font-size: 12px; font-weight: 700; line-height: 18px; text-align: center; letter-spacing: 0; }
.apps { margin-left: 15px; }
.tray { display: flex; align-items: center; padding-right: 29px; margin-left: auto; color: #fff; }
.tray .ico { stroke-width: 1.700; }
.t-cloud { margin-left: 25px; } .t-sync { margin-left: 24px; } .t-pad { margin-left: 24px; } .t-wifi { margin-left: 25px; } .t-vol { margin-left: 12px; } .t-bat { margin-left: 12px; }
.clock { width: 98px; margin: -2px 0 0 18px; display: flex; flex-direction: column; align-items: flex-end; font-size: 17px; line-height: 24px; letter-spacing: 0.005em; white-space: nowrap; }
```
